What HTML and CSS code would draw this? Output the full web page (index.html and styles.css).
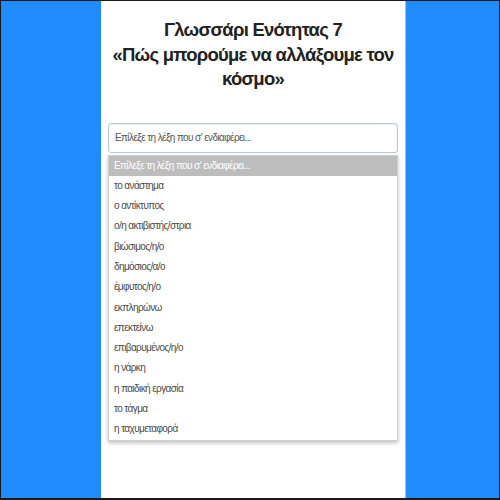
FILE: index.html
```html
<!DOCTYPE html>
<html lang="el">
<head>
    <meta charset="UTF-8">
    <meta name="viewport" content="width=device-width, initial-scale=1.0">
    <title>Γλωσσάρι Ενότητας 7</title>
    <link rel="stylesheet" href="styles.css">
</head>
<body>
    <div class="frame">
        <div class="panel">
            <h1 class="title">Γλωσσάρι Ενότητας 7<br>«Πώς μπορούμε να αλλάξουμε τον κόσμο»</h1>
            <div class="picker">
                <div class="picker-field">Επίλεξε τη λέξη που σ' ενδιαφέρει...</div>
                <ul class="picker-list">
                    <li class="selected">Επίλεξε τη λέξη που σ' ενδιαφέρει...</li>
                    <li>το ανάστημα</li>
                    <li>ο αντίκτυπος</li>
                    <li>ο/η ακτιβιστής/στρια</li>
                    <li>βιώσιμος/η/ο</li>
                    <li>δημόσιος/α/ο</li>
                    <li>έμφυτος/η/ο</li>
                    <li>εκπληρώνω</li>
                    <li>επεκτείνω</li>
                    <li>επιβαρυμένος/η/ο</li>
                    <li>η νάρκη</li>
                    <li>η παιδική εργασία</li>
                    <li>το τάγμα</li>
                    <li>η ταχυμεταφορά</li>
                </ul>
            </div>
        </div>
    </div>
</body>
</html>
```

FILE: styles.css
```css
:root {
    --blue: #1f8bff;
    --text: #222;
    --item: #4a4a4a;
}
body {
    margin: 0;
    font-family: 'Liberation Sans', Arial, sans-serif;
}
.frame {
    box-sizing: border-box;
    width: 500px;
    height: 500px;
    border: 1px solid #1a1a1a;
    border-bottom-width: 2px;
    background: var(--blue);
    display: flex;
    justify-content: center;
    overflow: hidden;
}
.panel {
    width: 304px;
    margin-left: 6px;
    background: #fff;
    padding: 17px 7px 0;
    box-sizing: border-box;
    box-shadow: 1px 0 0 #8fc4ff;
}
.title {
    margin: 0;
    font-size: 18.5px;
    line-height: 24.5px;
    font-weight: bold;
    text-align: center;
    color: var(--text);
    letter-spacing: -0.75px;
}
.picker {
    margin-top: 31px;
    font-size: 10px;
    letter-spacing: -0.6px;
}
.picker-field {
    height: 30px;
    box-sizing: border-box;
    border: 1px solid #b6cadb;
    border-radius: 3px;
    padding: 0 6px;
    line-height: 28px;
    color: #555;
    box-shadow: inset 0 1px 2px rgba(0, 0, 0, 0.08);
}
.picker-list {
    list-style: none;
    margin: 2px 0 0;
    padding: 0;
    border: 1px solid #d0d0d0;
    box-shadow: 0 2px 4px rgba(0, 0, 0, 0.25);
}
.picker-list li {
    height: 20.3px;
    line-height: 20.3px;
    padding-left: 5px;
    color: var(--item);
}
.picker-list li.selected {
    background: #bdbdbd;
    color: #fff;
}
```
